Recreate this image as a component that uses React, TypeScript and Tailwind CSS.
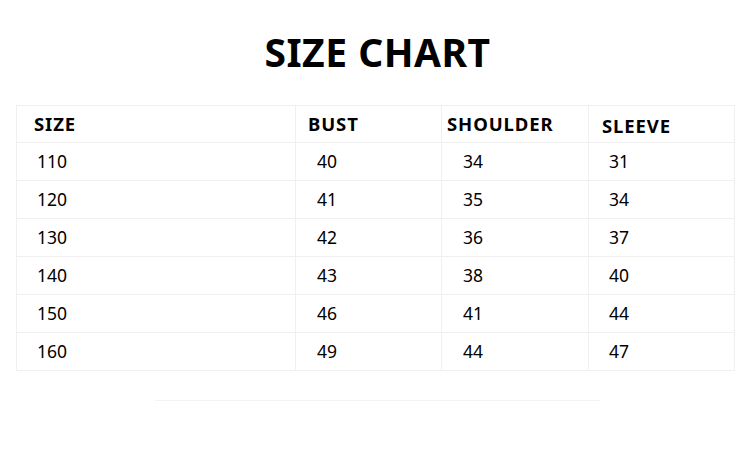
const rows = [
  { size: "110", bust: "40", shoulder: "34", sleeve: "31" },
  { size: "120", bust: "41", shoulder: "35", sleeve: "34" },
  { size: "130", bust: "42", shoulder: "36", sleeve: "37" },
  { size: "140", bust: "43", shoulder: "38", sleeve: "40" },
  { size: "150", bust: "46", shoulder: "41", sleeve: "44" },
  { size: "160", bust: "49", shoulder: "44", sleeve: "47" },
];

export default function App() {
  return (
    <div className="h-[450px] w-[750px] bg-white font-['Noto_Sans',sans-serif] text-black">
      <div className="pl-[5px] pt-[26px] text-center">
        <h1 className="text-[39px] font-bold leading-[52px] tracking-[0.5px]">
          SIZE CHART
        </h1>
      </div>

      <div className="ml-[16px] mt-[27px] w-[718px]">
        <table className="w-full table-fixed border-collapse">
          <colgroup>
            <col className="w-[279px]" />
            <col className="w-[146px]" />
            <col className="w-[147px]" />
            <col className="w-[146px]" />
          </colgroup>
          <thead>
            <tr className="h-[37px] text-[18.5px] font-bold tracking-[0.9px]">
              <th className="border border-[#f0f0f0] pl-[17px] text-left">SIZE</th>
              <th className="border border-[#f0f0f0] pl-[12px] text-left">BUST</th>
              <th className="border border-[#f0f0f0] pl-[5px] text-left">SHOULDER</th>
              <th className="border border-[#f0f0f0] pl-[13px] pt-[3px] text-left">SLEEVE</th>
            </tr>
          </thead>
          <tbody>
            {rows.map((item) => (
              <tr key={item.size} className="h-[38px] text-[17.5px]">
                <td className="border border-[#f0f0f0] pl-[20px]">{item.size}</td>
                <td className="border border-[#f0f0f0] pl-[21px]">{item.bust}</td>
                <td className="border border-[#f0f0f0] pl-[21px]">{item.shoulder}</td>
                <td className="border border-[#f0f0f0] pl-[20px]">{item.sleeve}</td>
              </tr>
            ))}
          </tbody>
        </table>
      </div>

      <div className="ml-[155px] mt-[29px] h-px w-[445px] bg-[#f3f3f3]" />
    </div>
  );
}
